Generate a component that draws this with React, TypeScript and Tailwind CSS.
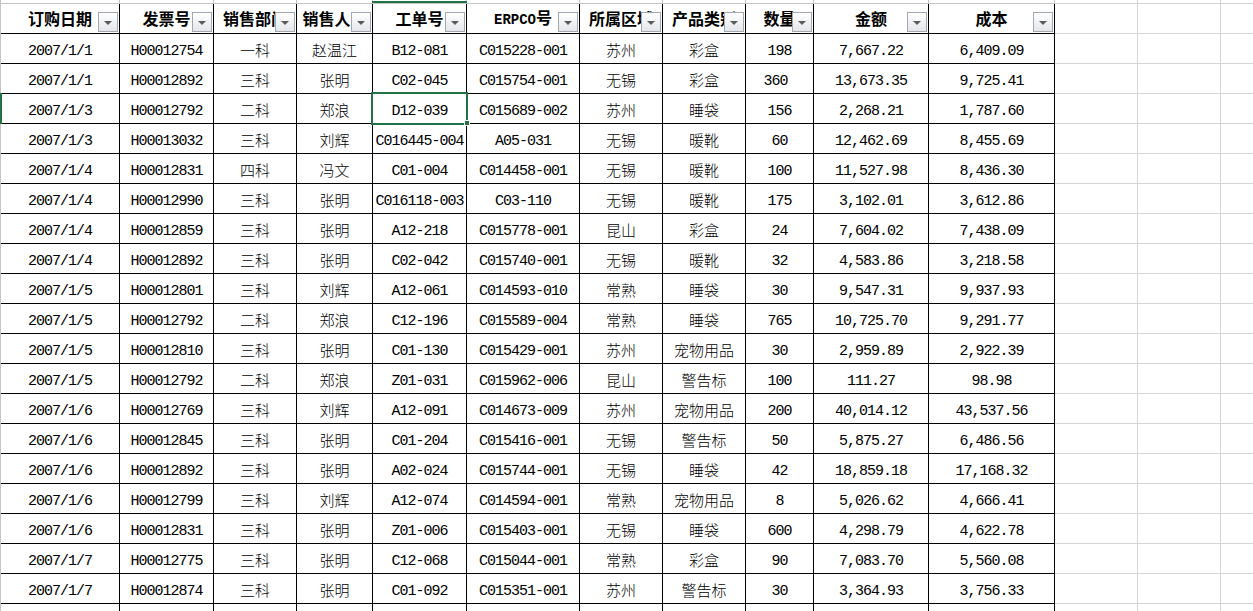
import React from 'react'

const cols = [119, 94, 83, 76, 94, 113, 83, 83, 68, 115, 126]
const extraCols = [83, 83, 83]

const headers = ['订购日期', '发票号', '销售部门', '销售人员', '工单号', 'ERPCO号', '所属区域', '产品类别', '数量', '金额', '成本']

const rows = [
  ['2007/1/1', 'H00012754', '一科', '赵温江', 'B12-081', 'C015228-001', '苏州', '彩盒', '198', '7,667.22', '6,409.09'],
  ['2007/1/1', 'H00012892', '三科', '张明', 'C02-045', 'C015754-001', '无锡', '彩盒', '360 ', '13,673.35', '9,725.41'],
  ['2007/1/3', 'H00012792', '二科', '郑浪', 'D12-039', 'C015689-002', '苏州', '睡袋', '156', '2,268.21', '1,787.60'],
  ['2007/1/3', 'H00013032', '三科', '刘辉', 'C016445-004', 'A05-031', '无锡', '暖靴', '60', '12,462.69', '8,455.69'],
  ['2007/1/4', 'H00012831', '四科', '冯文', 'C01-004', 'C014458-001', '无锡', '暖靴', '100', '11,527.98', '8,436.30'],
  ['2007/1/4', 'H00012990', '三科', '张明', 'C016118-003', 'C03-110', '无锡', '暖靴', '175', '3,102.01', '3,612.86'],
  ['2007/1/4', 'H00012859', '三科', '张明', 'A12-218', 'C015778-001', '昆山', '彩盒', '24', '7,604.02', '7,438.09'],
  ['2007/1/4', 'H00012892', '三科', '张明', 'C02-042', 'C015740-001', '无锡', '暖靴', '32', '4,583.86', '3,218.58'],
  ['2007/1/5', 'H00012801', '三科', '刘辉', 'A12-061', 'C014593-010', '常熟', '睡袋', '30', '9,547.31', '9,937.93'],
  ['2007/1/5', 'H00012792', '二科', '郑浪', 'C12-196', 'C015589-004', '常熟', '睡袋', '765', '10,725.70', '9,291.77'],
  ['2007/1/5', 'H00012810', '三科', '张明', 'C01-130', 'C015429-001', '苏州', '宠物用品', '30', '2,959.89', '2,922.39'],
  ['2007/1/5', 'H00012792', '二科', '郑浪', 'Z01-031', 'C015962-006', '昆山', '警告标', '100', '111.27', '98.98'],
  ['2007/1/6', 'H00012769', '三科', '刘辉', 'A12-091', 'C014673-009', '苏州', '宠物用品', '200', '40,014.12', '43,537.56'],
  ['2007/1/6', 'H00012845', '三科', '张明', 'C01-204', 'C015416-001', '无锡', '警告标', '50', '5,875.27', '6,486.56'],
  ['2007/1/6', 'H00012892', '三科', '张明', 'A02-024', 'C015744-001', '无锡', '睡袋', '42', '18,859.18', '17,168.32'],
  ['2007/1/6', 'H00012799', '三科', '刘辉', 'A12-074', 'C014594-001', '常熟', '宠物用品', '8', '5,026.62', '4,666.41'],
  ['2007/1/6', 'H00012831', '三科', '张明', 'Z01-006', 'C015403-001', '无锡', '睡袋', '600', '4,298.79', '4,622.78'],
  ['2007/1/7', 'H00012775', '三科', '张明', 'C12-068', 'C015044-001', '常熟', '彩盒', '90', '7,083.70', '5,560.08'],
  ['2007/1/7', 'H00012874', '三科', '张明', 'C01-092', 'C015351-001', '苏州', '警告标', '30', '3,364.93', '3,756.33'],
]

// split latin and CJK runs so each gets its own font
const Txt = ({ s, bold }: { s: string; bold?: boolean }) => {
  const parts = s.split(/([\x00-\x7f]+)/).filter(p => p !== '')
  return (
    <span className="whitespace-pre">
      {parts.map((p, i) =>
        /^[\x00-\x7f]+$/.test(p) ? (
          <span
            key={i}
            className={`font-['Liberation_Mono',monospace] ${bold ? 'text-[14px] font-bold' : 'text-[15px] tracking-[-1px]'}`}
          >
            {p}
          </span>
        ) : (
          <span key={i} className={`font-['Noto_Sans_CJK_SC',sans-serif] ${bold ? 'text-[16px] font-bold' : 'text-[15px] font-light'}`}>
            {p}
          </span>
        )
      )}
    </span>
  )
}

const FilterButton = () => (
  <div className="absolute right-[1px] bottom-[1px] w-[20px] h-[20px] border border-[#a3a8b0] bg-gradient-to-b from-white to-[#e4e6ea] flex items-center justify-center pt-[2px]">
    <svg width="8" height="4" viewBox="0 0 8 4">
      <path d="M0 0h8L4 4z" fill="#5a5a5a" />
    </svg>
  </div>
)

const GrayCells = ({ h }: { h: string }) => (
  <>
    {extraCols.map((w, i) => (
      <div key={i} className={`shrink-0 border-r border-b border-[#d4d4d4] ${h}`} style={{ width: w }} />
    ))}
  </>
)

export default function App() {
  return (
    <div className="w-[1253px] h-[611px] overflow-hidden bg-white relative text-black">
      <div className="border-l border-[#c4c4c4] flex flex-col">
        {/* strip of the row above */}
        <div className="flex h-[4px]">
          {cols.map((w, i) => (
            <div key={i} className="shrink-0 h-[4px] border-r border-b border-[#c4c4c4]" style={{ width: w }} />
          ))}
          {extraCols.map((w, i) => (
            <div key={i} className="shrink-0 h-[4px] border-r border-b border-[#d4d4d4]" style={{ width: w }} />
          ))}
        </div>

        {/* header row */}
        <div className="flex h-[30px]">
          {headers.map((t, i) => (
            <div
              key={i}
              className="relative shrink-0 h-[30px] border-r border-b border-black flex items-center justify-center overflow-hidden"
              style={{ width: cols[i] }}
            >
              <span className="whitespace-nowrap leading-[18px]">
                <Txt s={t} bold />
              </span>
              <FilterButton />
            </div>
          ))}
          <GrayCells h="h-[30px]" />
        </div>

        {/* data rows */}
        {rows.map((r, ri) => (
          <div key={ri} className="flex h-[30px]">
            {r.map((c, ci) => (
              <div
                key={ci}
                className="shrink-0 h-[30px] border-r border-b border-black flex items-center justify-center overflow-hidden pt-[3px] leading-[16px]"
                style={{ width: cols[ci] }}
              >
                <Txt s={c} />
              </div>
            ))}
            <GrayCells h="h-[30px]" />
          </div>
        ))}

        {/* partially visible row */}
        <div className="flex h-[30px]">
          {cols.map((w, i) => (
            <div key={i} className="shrink-0 h-[30px] border-r border-black" style={{ width: w }} />
          ))}
          <GrayCells h="h-[30px]" />
        </div>
      </div>

      {/* selected column / row indicators */}
      <div className="absolute left-[372px] top-[1px] w-[95px] h-[2px] bg-[#217346]" />
      <div className="absolute left-0 top-[93px] w-[2px] h-[31px] bg-[#217346]" />

      {/* active cell */}
      <div className="absolute left-[371px] top-[92px] w-[97px] h-[33px] border-2 border-[#217346]" />
      <div className="absolute left-[464px] top-[120px] w-[6px] h-[6px] bg-[#217346] border border-white" />
    </div>
  )
}
